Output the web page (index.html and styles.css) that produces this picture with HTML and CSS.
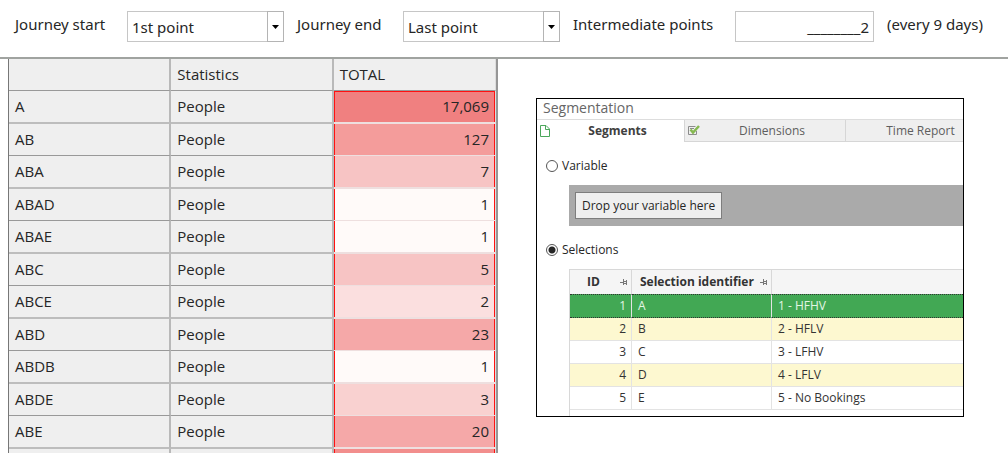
FILE: index.html
```html
<!DOCTYPE html>
<html lang="en">
<head>
    <meta charset="UTF-8">
    <meta name="viewport" content="width=device-width, initial-scale=1">
    <title>Journey</title>
    <link rel="stylesheet" href="styles.css">
</head>
<body>
    <form class="toolbar">
        <label class="start-label" for="start">Journey start</label>
        <div class="combo">
            <select id="start"><option>1st point</option></select>
            <span class="combo-arrow"><svg width="7" height="4" viewBox="0 0 7 4"><path d="M0 0h7L3.5 4z"/></svg></span>
        </div>
        <label class="end-label" for="end">Journey end</label>
        <div class="combo">
            <select id="end"><option>Last point</option></select>
            <span class="combo-arrow"><svg width="7" height="4" viewBox="0 0 7 4"><path d="M0 0h7L3.5 4z"/></svg></span>
        </div>
        <label class="points-label" for="points">Intermediate points</label>
        <input class="points" id="points" type="text" value="________2">
        <span class="hint">(every 9 days)</span>
    </form>

    <main class="content">
        <table class="report">
            <colgroup><col><col><col></colgroup>
            <thead>
                <tr><th></th><th>Statistics</th><th>TOTAL</th></tr>
            </thead>
            <tbody>
                <tr><td>A</td><td>People</td><td class="heat h8">17,069</td></tr>
                <tr><td>AB</td><td>People</td><td class="heat h6">127</td></tr>
                <tr><td>ABA</td><td>People</td><td class="heat h4">7</td></tr>
                <tr><td>ABAD</td><td>People</td><td class="heat h1">1</td></tr>
                <tr><td>ABAE</td><td>People</td><td class="heat h1">1</td></tr>
                <tr><td>ABC</td><td>People</td><td class="heat h4">5</td></tr>
                <tr><td>ABCE</td><td>People</td><td class="heat h2">2</td></tr>
                <tr><td>ABD</td><td>People</td><td class="heat h5">23</td></tr>
                <tr><td>ABDB</td><td>People</td><td class="heat h1">1</td></tr>
                <tr><td>ABDE</td><td>People</td><td class="heat h3">3</td></tr>
                <tr><td>ABE</td><td>People</td><td class="heat h5">20</td></tr>
                <tr><td></td><td></td><td class="heat h7"></td></tr>
            </tbody>
        </table>

        <section class="panel">
            <h2>Segmentation</h2>
            <div class="tabs">
                <button class="tab active" type="button">
                    <svg class="tab-icon" width="10" height="12" viewBox="0 0 10 12" fill="none" stroke="#4ca75c"><path d="M.5.5h5.500L9.500 4v7.500h-9zM5.500.5V4.500h4"/></svg>
                    Segments
                </button>
                <button class="tab" type="button">
                    <svg class="tab-icon" width="12" height="11" viewBox="0 0 12 11" fill="none"><path d="M8.500 6v3.500h-8v-8h7M2 3.500h4" stroke="#8c8c8c"/><path d="M2.500 4.500l2.500 3L11 1" stroke="#86b951" stroke-width="2.500"/></svg>
                    Dimensions
                </button>
                <button class="tab last" type="button">Time Report</button>
            </div>

            <label class="choice"><input type="radio" name="source"> Variable</label>
            <div class="drop-area">
                <button class="drop" type="button">Drop your variable here</button>
            </div>
            <label class="choice"><input type="radio" name="source" checked> Selections</label>

            <div class="grid-box">
                <table class="selections">
                    <colgroup><col class="col-id"><col class="col-ident"><col></colgroup>
                    <thead>
                        <tr>
                            <th><div class="head"><span>ID</span><svg width="8" height="7" viewBox="0 0 8 7" fill="none" stroke="#777"><path d="M0 3.500h3M3.500 0v6M3.500 2.500h3M3.500 4.500h3M6.500 1v5"/></svg></div></th>
                            <th><div class="head"><span>Selection identifier</span><svg width="8" height="7" viewBox="0 0 8 7" fill="none" stroke="#777"><path d="M0 3.500h3M3.500 0v6M3.500 2.500h3M3.500 4.500h3M6.500 1v5"/></svg></div></th>
                            <th></th>
                        </tr>
                    </thead>
                    <tbody>
                        <tr class="selected"><td>1</td><td>A</td><td>1 - HFHV</td></tr>
                        <tr><td>2</td><td>B</td><td>2 - HFLV</td></tr>
                        <tr><td>3</td><td>C</td><td>3 - LFHV</td></tr>
                        <tr><td>4</td><td>D</td><td>4 - LFLV</td></tr>
                        <tr><td>5</td><td>E</td><td>5 - No Bookings</td></tr>
                    </tbody>
                </table>
            </div>
        </section>
    </main>
</body>
</html>
```
FILE: styles.css
```css
* { box-sizing: border-box; }

body {
    display: flex;
    flex-direction: column;
    height: 100vh;
    margin: 0;
    overflow: hidden;
    background: #fff;
    color: #262626;
    font: 15px/20px "Open Sans", "Noto Sans", sans-serif;
}

button, input, select { font: inherit; color: inherit; }

table {
    border-collapse: separate;
    border-spacing: 0;
    table-layout: fixed;
}

th { font-weight: normal; text-align: left; }

/* toolbar */
.toolbar {
    display: flex;
    flex: none;
    align-items: flex-start;
    padding: 11px 0 15px 15px;
    font-family: "Noto Sans", "Open Sans", sans-serif;
}

.toolbar label, .hint { padding-top: 3px; white-space: nowrap; }
.start-label { width: 112px; }
.end-label { width: 106px; margin-left: 13px; }
.points-label { width: 162px; margin-left: 13px; }
.hint { margin-left: 13px; }

.combo { position: relative; width: 157px; }

.combo select {
    display: block;
    width: 100%;
    height: 31px;
    padding: 0 28px 0 4px;
    border: 1px solid #c6c6c6;
    border-radius: 0;
    background: #fff;
    appearance: none;
}

.combo-arrow {
    position: absolute;
    top: 0;
    right: 0;
    display: flex;
    align-items: center;
    justify-content: center;
    width: 17px;
    height: 31px;
    border: 1px solid #b4b4b4;
    pointer-events: none;
}

.points {
    width: 139px;
    height: 31px;
    padding: 0 4px;
    border: 1px solid #c6c6c6;
    text-align: right;
}

/* journey report */
.content {
    display: flex;
    flex: 1;
    align-items: flex-start;
    min-height: 0;
    padding: 0 44px 0 8px;
    border-top: 2px solid #a0a3a0;
}

.report {
    flex: none;
    width: 490px;
    border-left: 1px solid #777;
    border-right: 2px solid #969696;
    background: #efefef;
}

.report th, .report td {
    height: 32px;
    padding: 0 6px 2px;
    border-right: 2px solid #b9b9b9;
    border-bottom: 1px solid #999;
}

.report tbody tr:nth-child(odd) td {
    height: 33px;
    border-bottom: 2px solid #bdbdbd;
}

.report th:last-child, .report td:last-child { border-right: 1px solid #ddd; }

.report .heat,
.report tbody tr:nth-child(odd) .heat {
    border-bottom-color: #eedfdf;
    box-shadow: inset 1px 0 #f11, inset -1px 0 #f11;
    text-align: right;
}

.report tbody tr:first-child .heat { box-shadow: inset 0 1px #f11, inset 1px 0 #f11, inset -1px 0 #f11; }

.heat { background-clip: padding-box; }
.h1 { background-color: #fffaf9; }
.h2 { background-color: #fbdfdf; }
.h3 { background-color: #f9d1d0; }
.h4 { background-color: #f7c4c4; }
.h5 { background-color: #f5a8a8; }
.h6 { background-color: #f49c9b; }
.h7 { background-color: #f28e8d; }
.h8 { background-color: #f08080; }

/* segmentation panel */
.panel {
    flex: 1;
    min-width: 0;
    height: 319px;
    margin: 39px 0 0 38px;
    border: 1px solid #000;
    overflow: hidden;
    font-size: 12px;
    line-height: 16px;
}

.panel h2 {
    margin: 0;
    padding: 0 6px 2px;
    border-bottom: 1px solid #ddd;
    color: #666;
    font: 14px/18px "Open Sans", "Noto Sans", sans-serif;
}

.tabs { display: flex; }

.tab {
    display: flex;
    flex: none;
    align-items: center;
    justify-content: center;
    position: relative;
    width: 161px;
    height: 22px;
    padding: 0 0 0 14px;
    border: solid #d6d6d6;
    border-width: 0 0 1px 1px;
    background: #efefef;
    color: #5e5e5e;
}

.tab.active {
    width: 147px;
    border: 0;
    background: #fff;
    color: #404040;
    font-weight: bold;
}

.tab.last { flex: 1; }

.tab.last { padding-left: 32px; }

.tab-icon { position: absolute; left: 3px; top: 5px; }

.choice {
    display: flex;
    align-items: center;
    gap: 4px;
    margin-top: 16px;
    padding-left: 9px;
}

.choice input {
    width: 12px;
    height: 12px;
    margin: 0;
    border: 1px solid #555;
    border-radius: 50%;
    background: #fff;
    appearance: none;
}

.choice input:checked { background: radial-gradient(circle, #262626 3px, #fff 4px); }

.drop-area {
    margin: 11px 0 0 32px;
    padding: 7px 6px;
    background: #aaa;
}

.drop {
    display: block;
    height: 27px;
    padding: 0 6px;
    border: 1px solid #7d7d7d;
    background: #efefef;
}

.grid-box {
    height: 160px;
    margin: 11px 0 0 32px;
    border-left: 1px solid #d8d8d8;
}

.selections { width: 100%; color: #333; }
.col-id { width: 62px; }
.col-ident { width: 140px; }

.selections th {
    height: 25px;
    padding: 0 3px 0 8px;
    border: solid #d8d8d8;
    border-width: 1px 1px 0 0;
    background: #f5f5f5;
    font-weight: bold;
}

.selections th:last-child, .selections td:last-child { border-right: 0; }

.head {
    display: flex;
    align-items: center;
    justify-content: space-between;
}

.selections th:first-child { padding-left: 17px; }

.selections td {
    height: 23px;
    padding: 0 6px;
    border: solid #e3e3e3;
    border-width: 0 1px 1px 0;
}

.selections td:first-child { padding-right: 5px; text-align: right; }
.selections tbody tr:nth-child(even) { background: #fdf8d0; }

.selections .selected td {
    height: 24px;
    border-top: 1px dotted #333;
    border-bottom: 1px dotted #333;
    background: #42a854;
    color: #e2f6e5;
}
```
